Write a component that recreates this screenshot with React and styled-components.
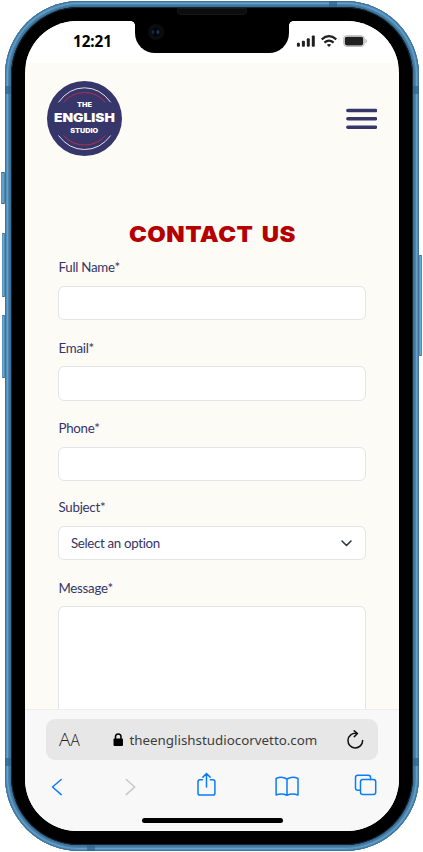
import React from 'react';
import styled, { createGlobalStyle } from 'styled-components';

const GlobalStyle = createGlobalStyle`
  * { box-sizing: border-box; }
  html, body { margin: 0; background: #fff; }
  body { overflow: hidden; }
`;

const Stage = styled.main`
  width: 423px;
  height: 852px;
  padding: 1px 4px 1px 5px;
  background: #fff;
`;

const Phone = styled.div`
  position: relative;
  width: 414px;
  height: 850px;
  padding: 6px;
  border-radius: 74px;
  background: #3a7099;
  box-shadow: inset 0 0 0 1px #3f7199, inset 0 0 0 2px #5590bb, inset 0 0 0 3px #66a0c8, inset 0 0 0 4px #4a85b0, inset 0 0 0 5px #40789f;
`;

const SideButton = styled.span`
  position: absolute;
  top: ${(p) => p.$top}px;
  ${(p) => p.$side}: ${(p) => -p.$depth}px;
  width: ${(p) => p.$depth}px;
  height: ${(p) => p.$height}px;
  border: solid #36678c;
  border-width: 1px 0;
  border-radius: 1px;
  background: linear-gradient(90deg, #4d87b0, #74a8cd, #427aa4);
`;

const Antenna = styled.span`
  position: absolute;
  top: ${(p) => p.$top}px;
  left: ${(p) => p.$left}px;
  width: ${(p) => p.$w}px;
  height: ${(p) => p.$h}px;
  background: #2f618a;
  opacity: 0.7;
`;

const Bezel = styled.div`
  position: relative;
  height: 838px;
  padding: 14px;
  border-radius: 68px;
  background: #000;
  box-shadow: inset 0 0 0 1px #182631;
`;

const Screen = styled.div`
  display: flex;
  flex-direction: column;
  width: 374px;
  height: 810px;
  overflow: hidden;
  border-radius: 52px;
  background: #fcfbf6;
`;

const Notch = styled.div`
  position: absolute;
  top: 13px;
  left: 124px;
  width: 154px;
  height: 33px;
  border-radius: 0 0 20px 20px;
  background: #000;
  &::before, &::after {
    content: '';
    position: absolute;
    top: 1px;
    width: 4px;
    height: 4px;
  }
  &::before { left: -4px; background: radial-gradient(circle at 0 4px, transparent 3.5px, #000 4px); }
  &::after { right: -4px; background: radial-gradient(circle at 4px 4px, transparent 3.5px, #000 4px); }
`;

const Camera = styled.span`
  position: absolute;
  top: 4px;
  left: 13px;
  width: 16px;
  height: 16px;
  border-radius: 50%;
  background: radial-gradient(ellipse 2px 3px at 10px 8px, #2a4b91, transparent), radial-gradient(ellipse 2px 3px at 5px 8px, #183d48, transparent), radial-gradient(circle, #030308 4px, #0b0c0e 5px);
`;

const Speaker = styled.span`
  position: absolute;
  top: -12px;
  left: 42px;
  width: 70px;
  height: 7px;
  border-radius: 1px 1px 4px 4px;
  border: 1px solid #171717;
  background: #0c0c0c;
`;

const StatusBar = styled.header`
  display: flex;
  justify-content: space-between;
  flex: none;
  height: 42px;
  padding: 9px 32px 0 48px;
  background: #fff;
`;

const Time = styled.time`
  font: 700 15.3px/23px 'Noto Sans', sans-serif;
  color: #000;
  letter-spacing: -0.1px;
`;

const StatusIcons = styled.svg`
  width: 71px;
  height: 14px;
  margin-top: 4px;
`;

const PageBody = styled.section`
  display: flex;
  flex-direction: column;
  flex: 1;
  min-height: 0;
  overflow: hidden;
`;

const SiteHeader = styled.div`
  display: flex;
  justify-content: space-between;
  flex: none;
  height: 158px;
  padding: 18px 22px 0;
`;

const Logo = styled.div`
  position: relative;
  display: flex;
  flex-direction: column;
  align-items: center;
  width: 75px;
  height: 75px;
  padding-top: 20px;
  border-radius: 50%;
  background: #36366b;
  color: #fff;
`;

const LogoArcs = styled.svg`
  position: absolute;
  inset: 0;
`;

const LogoWord = styled.span`
  font: 900 ${(p) => p.$size}px/${(p) => p.$line}px Inter, sans-serif;
  transform: scaleX(${(p) => p.$stretch});
`;

const MenuButton = styled.svg`
  width: 32px;
  height: 22px;
  margin-top: 27px;
`;

const Title = styled.h1`
  flex: none;
  margin: 0;
  height: 26px;
  text-align: center;
  white-space: nowrap;
  font: 900 22px/26px Inter, sans-serif;
  letter-spacing: 0.45px;
  word-spacing: 3px;
  color: #b50000;
  transform: translateX(0.5px) scaleX(1.085);
`;

const Form = styled.form`
  display: flex;
  flex-direction: column;
  padding: 0 33px;
`;

const Field = styled.div`
  display: flex;
  flex-direction: column;
  flex: none;
  height: ${(p) => p.$height}px;
  padding-top: 11px;
  font: 400 13.3px/18px Lato, sans-serif;
  font-variant-ligatures: none;
  letter-spacing: -0.27px;
  color: #353568;
`;

const LabelText = styled.span`
  height: 18px;
  margin-bottom: ${(p) => p.$gap || 10}px;
  padding-left: 0.5px;
`;

const Control = styled.span`
  display: flex;
  align-items: center;
  justify-content: space-between;
  width: 308px;
  height: ${(p) => p.$height || 34}px;
  padding: 0 13px 0 12px;
  border: 1px solid #e3e5e8;
  border-radius: 6px;
  background: #fff;
`;

const Option = styled.span`
  letter-spacing: -0.33px;
`;

const BrowserBar = styled.footer`
  display: flex;
  flex-direction: column;
  align-items: center;
  flex: none;
  height: 122px;
  padding-top: 9px;
  border-top: 1px solid #eee;
  background: #f8f8f8;
`;

const AddressBar = styled.div`
  display: flex;
  align-items: center;
  flex: none;
  width: 332px;
  height: 41px;
  padding: 0 14px 0 13px;
  border-radius: 9px;
  background: #e7e7e7;
  color: #3d3d3d;
  font: 400 14px/20px 'Noto Sans', sans-serif;
`;

const TextSize = styled.span`
  width: 53.5px;
  font: 300 19px/24px 'Open Sans', sans-serif;
  color: #222;
  small { font-size: 15.5px; }
`;

const Address = styled.span`
  flex: 1;
  margin-left: 6px;
  white-space: nowrap;
  font-size: 13.35px;
`;

const Toolbar = styled.nav`
  flex: none;
  width: 332px;
  height: 40px;
  margin-top: 6px;
`;

const HomeBar = styled.span`
  width: 141px;
  height: 5px;
  margin-top: 12px;
  border-radius: 3px;
  background: #000;
`;

const FIELDS = [
  { label: 'Full Name*', height: 81 },
  { label: 'Email*', height: 80, control: 35, gap: 9 },
  { label: 'Phone*', height: 79 },
  { label: 'Subject*', height: 81, option: 'Select an option' },
  { label: 'Message*', height: 190, control: 150, gap: 9 },
];

function StatusGlyphs() {
  return (
    <StatusIcons viewBox="0 0 71 14">
      <g fill="#202020">
        <rect x="0.9" y="8.7" width="3" height="4" rx="1" />
        <rect x="5.9" y="6.7" width="3" height="6" rx="1" />
        <rect x="10.8" y="4.2" width="3" height="8.5" rx="1" />
        <rect x="15.8" y="1.6" width="3" height="11.1" rx="1" />
      </g>
      <g fill="none" stroke="#202020" strokeWidth="2.2">
        <path d="M25.7 5.3q7.3-6.2 14.6 0M28.4 8.6q4.6-4 9.2 0" />
        <path d="M30.8 10.8q2.2-1.5 4.4 0L33 12.9z" fill="#202020" stroke="none" />
      </g>
      <rect x="47.8" y="1.8" width="20.4" height="10.6" rx="2.7" fill="#fff" stroke="#b3b3b3" />
      <rect x="48.8" y="2.8" width="18.4" height="8.6" rx="1.8" fill="#202020" />
      <path d="M69.4 4.8q1.5.5 1.5 2.2t-1.5 2.2z" fill="#b3b3b3" />
    </StatusIcons>
  );
}

export default function App() {
  return (
    <Stage>
      <GlobalStyle />
      <Phone>
        <SideButton $side="left" $depth={4} $top={171} $height={32} />
        <SideButton $side="left" $depth={3} $top={232} $height={64} />
        <SideButton $side="left" $depth={3} $top={314} $height={63} />
        <SideButton $side="right" $depth={3} $top={254} $height={101} />
        <Antenna $top={85} $left={0} $w={6} $h={8} />
        <Antenna $top={85} $left={408} $w={6} $h={8} />
        <Antenna $top={757} $left={0} $w={6} $h={8} />
        <Antenna $top={757} $left={408} $w={6} $h={8} />
        <Antenna $top={0} $left={324} $w={8} $h={6} />
        <Antenna $top={844} $left={82} $w={8} $h={6} />
        <Bezel>
          <Screen>
            <StatusBar>
              <Time>12:21</Time>
              <StatusGlyphs />
            </StatusBar>
            <PageBody>
              <SiteHeader>
                <Logo>
                  <LogoArcs viewBox="0 0 75 75" fill="none">
                    <path d="M11.5 21.3Q22 6.8 37.5 6.8T63.7 21.3M11.5 54.5Q22 68.5 37.5 68.5T63.7 54.5" stroke="#dedfea" strokeWidth="1" />
                    <path d="M16.5 21.5Q25 11.5 37.5 11.5T58.5 21.5M16.5 54.5Q25 64 37.5 64T58.5 54.5" stroke="#b52d48" strokeWidth="1" />
                  </LogoArcs>
                  <LogoWord $size={6.3} $line={9} $stretch={1.15}>THE</LogoWord>
                  <LogoWord $size={12} $line={16} $stretch={1.15}>ENGLISH</LogoWord>
                  <LogoWord $size={6.3} $line={10} $stretch={1.15}>STUDIO</LogoWord>
                </Logo>
                <MenuButton viewBox="0 0 32 22" stroke="#36366b" strokeWidth="3.6" strokeLinecap="round">
                  <path d="M2.9 2.5h27.6M2.9 10.7h27.6M2.9 19.2h27.6" />
                </MenuButton>
              </SiteHeader>
              <Title>CONTACT US</Title>
              <Form>
                {FIELDS.map((f) => (
                  <Field key={f.label} $height={f.height}>
                    <LabelText $gap={f.gap}>{f.label}</LabelText>
                    <Control $height={f.control}>
                      {f.option && (
                        <>
                          <Option>{f.option}</Option>
                          <svg width="11" height="7" viewBox="0 0 11 7" fill="none" stroke="#343a40" strokeWidth="1.6" strokeLinecap="round" strokeLinejoin="round">
                            <path d="M1 1l4.5 4.5L10 1" />
                          </svg>
                        </>
                      )}
                    </Control>
                  </Field>
                ))}
              </Form>
            </PageBody>
            <BrowserBar>
              <AddressBar>
                <TextSize>A<small>A</small></TextSize>
                <svg width="11" height="14" viewBox="0 0 11 14">
                  <rect x="0.5" y="5.5" width="9.5" height="7.5" rx="1" fill="#000" />
                  <path d="M2.5 6V3.8a2.75 2.75 0 0 1 5.5 0V6" fill="none" stroke="#000" strokeWidth="1.5" />
                </svg>
                <Address>theenglishstudiocorvetto.com</Address>
                <svg width="18" height="20" viewBox="0 0 18 20" fill="none" stroke="#111" strokeWidth="1.5" strokeLinecap="round" strokeLinejoin="round">
                  <path d="M10.3 3.4a7.3 7.3 0 1 0 6.3 7.2M8.2 0.8l3.3 2.7-3.2 3.1" />
                </svg>
              </AddressBar>
              <Toolbar>
                <svg width="332" height="40" viewBox="0 0 332 40" fill="none" stroke="#0a7cf5" strokeWidth="1.5" strokeLinecap="round" strokeLinejoin="round">
                  <path d="M15.2 13.5L6.5 21l8.7 7.6" />
                  <path d="M80.2 13.5l8.5 7.5-8.5 7.6" stroke="#c7c7c7" />
                  <path d="M156.5 13.7h-2.7q-1.8 0-1.8 1.8v11.7q0 1.8 1.8 1.8h13.3q1.8 0 1.8-1.8V15.5q0-1.8-1.8-1.8h-2.7M160.5 21V7.5m-3.6 3.6l3.6-3.6 3.6 3.6" />
                  <path d="M241 13q-5.4-3.2-10.9-.5V29q5.5-2.2 10.9.3q5.4-2.5 11-.3V12.5q-5.6-2.7-11 .5v16.3" />
                  <path d="M314 24.3h-2.2q-2.3 0-2.3-2.3V11.6q0-2.3 2.3-2.3h10.5q2.3 0 2.3 2.3v1.8" />
                  <rect x="314.5" y="13.5" width="15.2" height="15" rx="2.3" />
                </svg>
              </Toolbar>
              <HomeBar />
            </BrowserBar>
          </Screen>
          <Notch>
            <Speaker />
            <Camera />
          </Notch>
        </Bezel>
      </Phone>
    </Stage>
  );
}
